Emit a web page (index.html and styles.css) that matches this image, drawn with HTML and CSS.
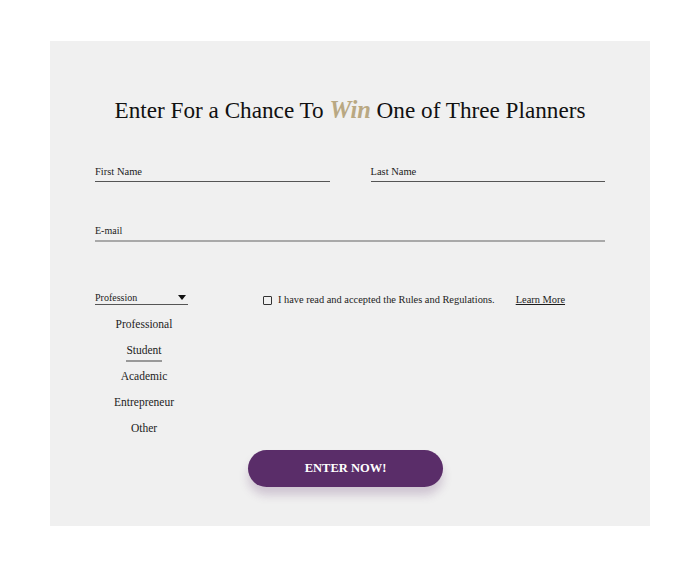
FILE: index.html
```html
<!DOCTYPE html>
<html lang="en">
<head>
    <meta charset="UTF-8">
    <meta name="viewport" content="width=device-width, initial-scale=1.0">
    <title>Enter For a Chance To Win</title>
    <link rel="stylesheet" href="styles.css">
</head>
<body>
    <div class="panel">
        <h1 class="title">Enter For a Chance To <em class="win">Win</em> One of Three Planners</h1>

        <div class="row">
            <div class="field">First Name</div>
            <div class="field">Last Name</div>
        </div>

        <div class="field field-wide">E-mail</div>

        <div class="bottom">
            <div class="profession">
                <div class="select">
                    <span>Profession</span>
                    <span class="caret"></span>
                </div>
                <ul class="options">
                    <li>Professional</li>
                    <li><span class="picked">Student</span></li>
                    <li>Academic</li>
                    <li>Entrepreneur</li>
                    <li>Other</li>
                </ul>
            </div>
            <div class="agree">
                <span class="box"></span>
                <span class="agree-text">I have read and accepted the Rules and Regulations.</span>
                <a class="learn" href="#">Learn More</a>
            </div>
        </div>

        <button class="enter">ENTER NOW!</button>
    </div>
</body>
</html>
```

FILE: styles.css
```css
body {
    margin: 0;
    background: #ffffff;
    font-family: 'Liberation Serif', 'Times New Roman', serif;
    color: #1c1c1c;
}
.panel {
    margin: 41px 0 0 50px;
    width: 600px;
    height: 485px;
    box-sizing: border-box;
    padding: 54px 45px 0 45px;
    background: #f0f0f0;
}
.title {
    margin: 0;
    height: 30px;
    font-size: 23.2px;
    line-height: 30px;
    font-weight: normal;
    text-align: center;
    color: #111;
}
.win {
    font-weight: bold;
    font-size: 24.5px;
    line-height: 1;
    color: #b9a882;
}
.row {
    display: flex;
    gap: 41px;
    margin-top: 40px;
}
.field {
    flex: 1;
    font-size: 10.5px;
    line-height: 14px;
    padding-bottom: 2px;
    border-bottom: 1px solid #555;
}
.field-wide {
    margin-top: 42px;
    border-bottom: 2px solid #a9a9a9;
    font-size: 10px;
}
.bottom {
    display: flex;
    margin-top: 49px;
}
.profession {
    width: 98px;
}
.select {
    width: 93px;
    display: flex;
    justify-content: space-between;
    align-items: center;
    font-size: 10px;
    line-height: 13px;
    border-bottom: 1px solid #555;
}
.caret {
    width: 0;
    height: 0;
    margin-right: 2px;
    border-left: 4px solid transparent;
    border-right: 4px solid transparent;
    border-top: 5px solid #111;
}
.options {
    list-style: none;
    margin: 6px 0 0 0;
    padding: 0;
    text-align: center;
    font-size: 11.5px;
    line-height: 26px;
}
.picked {
    display: inline-block;
    line-height: 14px;
    padding-bottom: 3px;
    border-bottom: 2px solid #999;
}
.agree {
    display: flex;
    align-items: center;
    height: 16px;
    margin-left: 70px;
    font-size: 10.4px;
}
.box {
    width: 7px;
    height: 7px;
    border: 1.5px solid #333;
    border-radius: 1px;
    margin-top: 2px;
}
.agree-text {
    margin-left: 6px;
}
.learn {
    margin-left: 21px;
    color: #1c1c1c;
}
.enter {
    display: block;
    margin: 9px 0 0 153px;
    width: 195px;
    height: 37px;
    border: none;
    border-radius: 19px;
    background: #5a2d69;
    color: #ffffff;
    font-family: 'Liberation Serif', 'Times New Roman', serif;
    font-weight: bold;
    font-size: 12.5px;
    box-shadow: 0 8px 10px rgba(90, 45, 105, 0.22);
    cursor: pointer;
}
```
